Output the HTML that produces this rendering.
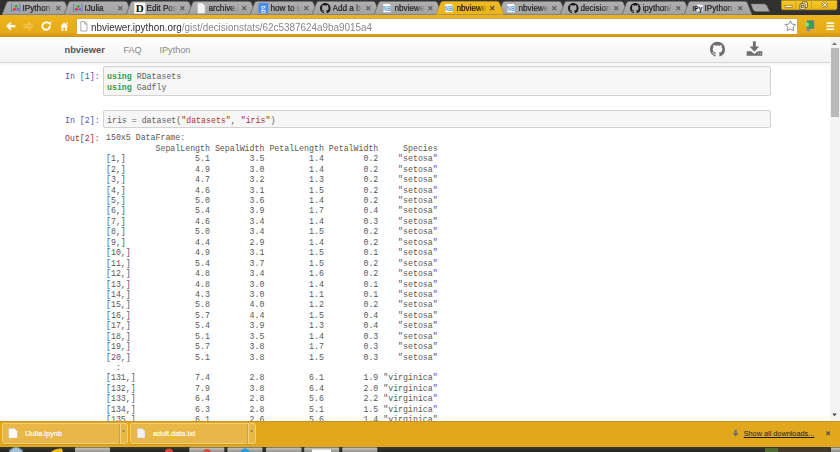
<!DOCTYPE html>
<html><head><meta charset="utf-8">
<style>
*{margin:0;padding:0;box-sizing:border-box}
html,body{width:840px;height:452px;overflow:hidden;background:#fff;font-family:"Liberation Sans",sans-serif}
.abs{position:absolute}
.tt{position:absolute;top:3.6px;font-size:8.2px;line-height:10px;width:30px;overflow:hidden;white-space:nowrap;
  -webkit-mask-image:linear-gradient(90deg,#000 70%,transparent 100%);-webkit-text-stroke:0.2px currentColor}
.tx{position:absolute;top:2.5px;font-size:9px;line-height:10px}
pre{font-family:"Liberation Mono",monospace}
.mono{font-family:"Liberation Mono",monospace;font-size:8.25px;line-height:10.44px;white-space:pre}
</style></head><body>
<!-- frame -->
<div class="abs" style="left:0;top:0;width:840px;height:16px;background-color:#343434;background-image:linear-gradient(45deg,#2a2a2a 25%,transparent 25%,transparent 75%,#2a2a2a 75%),linear-gradient(45deg,#2a2a2a 25%,transparent 25%,transparent 75%,#2a2a2a 75%);background-size:3px 3px;background-position:0 0,1.5px 1.5px"></div>
<svg class="abs" style="left:0;top:0" width="840" height="40" viewBox="0 0 840 40">
<defs>
<linearGradient id="tbg" x1="0" y1="0" x2="0" y2="1"><stop offset="0" stop-color="#efba22"/><stop offset="1" stop-color="#ecb41c"/></linearGradient>
<linearGradient id="itab" x1="0" y1="0" x2="0" y2="1"><stop offset="0" stop-color="#b0b0b0"/><stop offset="1" stop-color="#a2a2a2"/></linearGradient>
</defs>
<path d="M2,14.6 L6.6,2.8 Q7.3,1.3 9.2,1.3 L62.8,1.3 Q64.7,1.3 65.4,2.8 L70,14.6" fill="url(#itab)" stroke="#505050" stroke-width="0.6"/><path d="M64,14.6 L68.6,2.8 Q69.3,1.3 71.2,1.3 L124.8,1.3 Q126.7,1.3 127.4,2.8 L132,14.6" fill="url(#itab)" stroke="#505050" stroke-width="0.6"/><path d="M126,14.6 L130.6,2.8 Q131.3,1.3 133.2,1.3 L186.8,1.3 Q188.7,1.3 189.4,2.8 L194,14.6" fill="url(#itab)" stroke="#505050" stroke-width="0.6"/><path d="M188,14.6 L192.6,2.8 Q193.3,1.3 195.2,1.3 L248.8,1.3 Q250.7,1.3 251.4,2.8 L256,14.6" fill="url(#itab)" stroke="#505050" stroke-width="0.6"/><path d="M250,14.6 L254.6,2.8 Q255.3,1.3 257.2,1.3 L310.8,1.3 Q312.7,1.3 313.4,2.8 L318,14.6" fill="url(#itab)" stroke="#505050" stroke-width="0.6"/><path d="M312,14.6 L316.6,2.8 Q317.3,1.3 319.2,1.3 L372.8,1.3 Q374.7,1.3 375.4,2.8 L380,14.6" fill="url(#itab)" stroke="#505050" stroke-width="0.6"/><path d="M374,14.6 L378.6,2.8 Q379.3,1.3 381.2,1.3 L434.8,1.3 Q436.7,1.3 437.4,2.8 L442,14.6" fill="url(#itab)" stroke="#505050" stroke-width="0.6"/><path d="M498,14.6 L502.6,2.8 Q503.3,1.3 505.2,1.3 L558.8,1.3 Q560.7,1.3 561.4,2.8 L566,14.6" fill="url(#itab)" stroke="#505050" stroke-width="0.6"/><path d="M560,14.6 L564.6,2.8 Q565.3,1.3 567.2,1.3 L620.8,1.3 Q622.7,1.3 623.4,2.8 L628,14.6" fill="url(#itab)" stroke="#505050" stroke-width="0.6"/><path d="M622,14.6 L626.6,2.8 Q627.3,1.3 629.2,1.3 L682.8,1.3 Q684.7,1.3 685.4,2.8 L690,14.6" fill="url(#itab)" stroke="#505050" stroke-width="0.6"/><path d="M684,14.6 L688.6,2.8 Q689.3,1.3 691.2,1.3 L744.8,1.3 Q746.7,1.3 747.4,2.8 L752,14.6" fill="url(#itab)" stroke="#505050" stroke-width="0.6"/><rect x="2" y="13.9" width="750" height="0.8" fill="#8a9098"/><path d="M436,14.6 L440.6,2.8 Q441.3,1.3 443.2,1.3 L496.8,1.3 Q498.7,1.3 499.4,2.8 L504,14.6" fill="url(#tbg)" stroke="#9a7a20" stroke-width="0.5"/><g transform="translate(10.3,3.2)"><path d="M2.2,0.9 H1.2 V8.3 H2.2 M8.8,0.9 H9.8 V8.3 H8.8" fill="none" stroke="#4a7ec0" stroke-width="0.8"/><circle cx="5.8" cy="3.1" r="1.55" fill="#3aaa3a"/><circle cx="4.1" cy="6.1" r="1.55" fill="#d83a3a"/><circle cx="7.6" cy="6.1" r="1.55" fill="#9a5ac8"/></g><path d="M56.3,6.199999999999999 L60.3,10.2 M60.3,6.199999999999999 L56.3,10.2" stroke="#555" stroke-width="1.05"/><g transform="translate(72.3,3.2)"><path d="M2.2,0.9 H1.2 V8.3 H2.2 M8.8,0.9 H9.8 V8.3 H8.8" fill="none" stroke="#4a7ec0" stroke-width="0.8"/><circle cx="5.8" cy="3.1" r="1.55" fill="#3aaa3a"/><circle cx="4.1" cy="6.1" r="1.55" fill="#d83a3a"/><circle cx="7.6" cy="6.1" r="1.55" fill="#9a5ac8"/></g><path d="M118.3,6.199999999999999 L122.3,10.2 M122.3,6.199999999999999 L118.3,10.2" stroke="#555" stroke-width="1.05"/><g transform="translate(134.3,3.2)"><rect x="0" y="-0.5" width="11" height="11" fill="#fff"/><text x="5.5" y="9.2" font-family="Liberation Serif" font-weight="bold" font-size="11" text-anchor="middle" fill="#111">D</text></g><path d="M180.3,6.199999999999999 L184.3,10.2 M184.3,6.199999999999999 L180.3,10.2" stroke="#555" stroke-width="1.05"/><g transform="translate(196.3,3.2)"><path d="M1.5,0 H6 L8.5,2.5 V10 H1.5 Z" fill="#f4f4f4" stroke="#ddd" stroke-width="0.5"/></g><path d="M242.3,6.199999999999999 L246.3,10.2 M246.3,6.199999999999999 L242.3,10.2" stroke="#555" stroke-width="1.05"/><g transform="translate(258.3,3.2)"><rect x="0" y="-0.3" width="10" height="10.3" rx="0.8" fill="#4a8ae8"/><text x="5" y="7.8" font-family="Liberation Serif" font-size="10" text-anchor="middle" fill="#fff">g</text></g><path d="M304.3,6.199999999999999 L308.3,10.2 M308.3,6.199999999999999 L304.3,10.2" stroke="#555" stroke-width="1.05"/><g transform="translate(320.0,2.9000000000000004) scale(0.66)"><path d="M8 0C3.58 0 0 3.58 0 8c0 3.54 2.29 6.53 5.470 7.59.4.07.55-.17.55-.38 0-.19-.01-.82-.01-1.49-2.01.37-2.53-.49-2.69-.94-.09-.23-.48-.94-.82-1.13-.28-.15-.68-.52-.01-.53.63-.01 1.08.58 1.23.82.72 1.21 1.87.87 2.33.66.07-.52.28-.87.51-1.07-1.78-.2-3.64-.89-3.64-3.95 0-.87.31-1.59.82-2.15-.08-.2-.36-1.02.08-2.12 0 0 .67-.21 2.2.82.64-.18 1.320-.27 2-.27.68 0 1.36.09 2 .27 1.53-1.04 2.2-.82 2.2-.82.44 1.1.16 1.92.08 2.12.51.56.82 1.27.82 2.15 0 3.07-1.87 3.75-3.65 3.95.29.25.54.73.54 1.48 0 1.07-.01 1.93-.01 2.2 0 .21.15.46.55.38A8.013 8.013 0 0016 8c0-4.42-3.58-8-8-8z" fill="#1a1a1a"/></g><path d="M366.3,6.199999999999999 L370.3,10.2 M370.3,6.199999999999999 L366.3,10.2" stroke="#555" stroke-width="1.05"/><g transform="translate(383.3,4.0)"><path d="M0,0 H6 L7.4,1.4 V8.2 H0 Z" fill="#fff"/><text x="-0.2" y="7.3" font-family="Liberation Sans" font-weight="bold" font-size="6.6" fill="#5a9ad8" textLength="7.6" lengthAdjust="spacingAndGlyphs">NB</text></g><path d="M428.3,6.199999999999999 L432.3,10.2 M432.3,6.199999999999999 L428.3,10.2" stroke="#555" stroke-width="1.05"/><g transform="translate(445.3,4.0)"><path d="M0,0 H6 L7.4,1.4 V8.2 H0 Z" fill="#fff"/><text x="-0.2" y="7.3" font-family="Liberation Sans" font-weight="bold" font-size="6.6" fill="#5a9ad8" textLength="7.6" lengthAdjust="spacingAndGlyphs">NB</text></g><path d="M490.3,6.199999999999999 L494.3,10.2 M494.3,6.199999999999999 L490.3,10.2" stroke="#444" stroke-width="1.05"/><g transform="translate(507.3,4.0)"><path d="M0,0 H6 L7.4,1.4 V8.2 H0 Z" fill="#fff"/><text x="-0.2" y="7.3" font-family="Liberation Sans" font-weight="bold" font-size="6.6" fill="#5a9ad8" textLength="7.6" lengthAdjust="spacingAndGlyphs">NB</text></g><path d="M552.3,6.199999999999999 L556.3,10.2 M556.3,6.199999999999999 L552.3,10.2" stroke="#555" stroke-width="1.05"/><g transform="translate(568.0,2.9000000000000004) scale(0.66)"><path d="M8 0C3.58 0 0 3.58 0 8c0 3.54 2.29 6.53 5.470 7.59.4.07.55-.17.55-.38 0-.19-.01-.82-.01-1.49-2.01.37-2.53-.49-2.69-.94-.09-.23-.48-.94-.82-1.13-.28-.15-.68-.52-.01-.53.63-.01 1.08.58 1.23.82.72 1.21 1.87.87 2.33.66.07-.52.28-.87.51-1.07-1.78-.2-3.64-.89-3.64-3.95 0-.87.31-1.59.82-2.15-.08-.2-.36-1.02.08-2.12 0 0 .67-.21 2.2.82.64-.18 1.320-.27 2-.27.68 0 1.36.09 2 .27 1.53-1.04 2.2-.82 2.2-.82.44 1.1.16 1.92.08 2.12.51.56.82 1.27.82 2.15 0 3.07-1.87 3.75-3.65 3.95.29.25.54.73.54 1.48 0 1.07-.01 1.93-.01 2.2 0 .21.15.46.55.38A8.013 8.013 0 0016 8c0-4.42-3.58-8-8-8z" fill="#1a1a1a"/></g><path d="M614.3,6.199999999999999 L618.3,10.2 M618.3,6.199999999999999 L614.3,10.2" stroke="#555" stroke-width="1.05"/><g transform="translate(630.0,2.9000000000000004) scale(0.66)"><path d="M8 0C3.58 0 0 3.58 0 8c0 3.54 2.29 6.53 5.470 7.59.4.07.55-.17.55-.38 0-.19-.01-.82-.01-1.49-2.01.37-2.53-.49-2.69-.94-.09-.23-.48-.94-.82-1.13-.28-.15-.68-.52-.01-.53.63-.01 1.08.58 1.23.82.72 1.21 1.87.87 2.33.66.07-.52.28-.87.51-1.07-1.78-.2-3.64-.89-3.64-3.95 0-.87.31-1.59.82-2.15-.08-.2-.36-1.02.08-2.12 0 0 .67-.21 2.2.82.64-.18 1.320-.27 2-.27.68 0 1.36.09 2 .27 1.53-1.04 2.2-.82 2.2-.82.44 1.1.16 1.92.08 2.12.51.56.82 1.27.82 2.15 0 3.07-1.87 3.75-3.65 3.95.29.25.54.73.54 1.48 0 1.07-.01 1.93-.01 2.2 0 .21.15.46.55.38A8.013 8.013 0 0016 8c0-4.42-3.58-8-8-8z" fill="#1a1a1a"/></g><path d="M676.3,6.199999999999999 L680.3,10.2 M680.3,6.199999999999999 L676.3,10.2" stroke="#555" stroke-width="1.05"/><g transform="translate(692.3,3.2)"><rect x="4.6" y="1.4" width="6" height="6.8" fill="#f4f4f4"/><text x="0.2" y="7.6" font-family="Liberation Sans" font-weight="bold" font-size="7.4" fill="#222" textLength="9.8" lengthAdjust="spacingAndGlyphs">IPy</text></g><path d="M738.3,6.199999999999999 L742.3,10.2 M742.3,6.199999999999999 L738.3,10.2" stroke="#555" stroke-width="1.05"/>
<path d="M751,4 L764,4 Q766,4 767,6 L769.5,11.5 L756,11.5 Q754,11.5 753,9.5 Z" fill="#a8a8a8" stroke="#707070" stroke-width="0.5"/>
</svg>
<div class="tt" style="left:22.5px;color:#1e1e1e">IPython</div><div class="tt" style="left:84.5px;color:#1e1e1e">IJulia</div><div class="tt" style="left:146.5px;color:#1e1e1e">Edit Post</div><div class="tt" style="left:208.5px;color:#1e1e1e">archive.ir</div><div class="tt" style="left:270.5px;color:#1e1e1e">how to u</div><div class="tt" style="left:332.5px;color:#1e1e1e">Add a b</div><div class="tt" style="left:394.5px;color:#1e1e1e">nbviewer</div><div class="tt" style="left:456.5px;color:#111">nbviewer</div><div class="tt" style="left:518.5px;color:#1e1e1e">nbviewer</div><div class="tt" style="left:580.5px;color:#1e1e1e">decision</div><div class="tt" style="left:642.5px;color:#1e1e1e">ipython/</div><div class="tt" style="left:704.5px;color:#1e1e1e">IPython</div>
<!-- window controls -->
<svg class="abs" style="left:778px;top:0" width="62" height="12" viewBox="778 0 62 12">
<defs><linearGradient id="wcg" x1="0" y1="0" x2="0" y2="1"><stop offset="0" stop-color="#f8ca22"/><stop offset="1" stop-color="#ebb414"/></linearGradient></defs>
<path d="M781,0 V8.2 Q781,10.2 783,10.2 H835.4 Q837.4,10.2 837.4,8.2 V0 Z" fill="url(#wcg)" stroke="#3a3a3a" stroke-width="0.8"/>
<path d="M796.2,0 V9.6 M811.6,0 V9.6" stroke="#a88420" stroke-width="0.7"/>
<path d="M796.9,0 V9.6 M812.3,0 V9.6" stroke="#f8dc80" stroke-width="0.4"/>
<rect x="785" y="5.2" width="7" height="2.2" fill="#fff4d0" stroke="#5a4a20" stroke-width="0.5"/>
<rect x="802.2" y="1.9" width="5.2" height="5.6" rx="0.6" fill="#f8e8b0" stroke="#4a3a18" stroke-width="0.7"/>
<rect x="800" y="3.8" width="5.2" height="5.6" rx="0.6" fill="#f8e8b0" stroke="#4a3a18" stroke-width="0.7"/>
<rect x="801.3" y="5.4" width="2.6" height="2" fill="none" stroke="#4a3a18" stroke-width="0.6"/>
<path d="M822.2,2.2 L827.4,7.2 M827.4,2.2 L822.2,7.2" stroke="#4a3a18" stroke-width="2.2"/>
<path d="M822.2,2.2 L827.4,7.2 M827.4,2.2 L822.2,7.2" stroke="#fbeec0" stroke-width="1.2"/>
</svg>
<!-- toolbar -->
<div class="abs" style="left:0;top:14.6px;width:840px;height:22.6px;background:linear-gradient(#ecb41c,#e4a816)"></div>
<div class="abs" style="left:0;top:33.4px;width:840px;height:3.6px;background:linear-gradient(#dca014,#d49814)"></div>
<div class="abs" style="left:75.6px;top:18.2px;width:722.4px;height:15.5px;background:#fff;border:0.7px solid #d4a850;border-bottom:none;border-radius:1px"></div>
<div class="abs" style="left:0;top:37px;width:840px;height:0.7px;background:#e4e8ea"></div>
<svg class="abs" style="left:0;top:14" width="840" height="24" viewBox="0 14 840 24">
<!-- back -->
<path d="M6.2,26.1 L10.3,22.2 L11.3,23.3 L9.2,25.1 H15.1 V27.2 H9.2 L11.3,29.1 L10.3,30.2 Z" fill="#fffaf0" stroke="#fffaf0" stroke-width="0.4" stroke-linejoin="round"/>
<!-- forward -->
<path d="M33.2,26.2 L29,22.3 V24.9 H24 V27.5 H29 V30.2 Z" fill="#eab834" stroke="#f4d060" stroke-width="0.8" stroke-linejoin="round"/>
<!-- reload -->
<path d="M49.85,26.1 A3.75,3.75 0 1 1 47.98,22.85" stroke="#fffaf0" stroke-width="2" fill="none"/>
<path d="M46.9,22.4 L51.1,21.5 L50.9,25.8 Z" fill="#fffaf0"/>
<!-- home -->
<path d="M60.3,26.5 L64.1,22.2 L68.3,26.5 H67.1 V30.9 H65.1 V27.8 H63.3 V30.9 H61.5 V26.5 Z" fill="#fffaf0"/>
<rect x="66.4" y="22.2" width="1.1" height="2.4" fill="#fffaf0"/>
<!-- page icon -->
<path d="M80.8,21.6 H84.6 L87,24 V31 H80.8 Z" fill="#fff" stroke="#777" stroke-width="0.6"/>
<path d="M84.6,21.6 V24 H87" fill="none" stroke="#777" stroke-width="0.6"/>
<!-- star -->
<path d="M790.4,20.9 L792.1,24.1 L795.6,24.6 L793.1,27.1 L793.7,30.7 L790.4,29 L787.1,30.7 L787.7,27.1 L785.2,24.6 L788.7,24.1 Z" fill="#fff" stroke="#8a8a8a" stroke-width="0.95" stroke-linejoin="round"/>
<!-- extension -->
<rect x="807.3" y="20.9" width="6.2" height="7.4" rx="0.6" fill="#2aa84a" stroke="#68788e" stroke-width="1.3"/>
<path d="M805.2,22.6 L806.8,21.9 L808.8,23.4 V26.2 L806.8,26.8 L805.2,25.6 Z" fill="#88e27a"/>
<rect x="807.6" y="28.8" width="1.2" height="1.2" fill="#7a8aa0"/>
<ellipse cx="808.2" cy="30.4" rx="2.2" ry="0.8" fill="#7a8aa8"/>
<!-- menu -->
<rect x="826.5" y="22.3" width="7.7" height="1.7" fill="#fff8e0"/>
<rect x="826.5" y="25.3" width="7.7" height="1.7" fill="#fff8e0"/>
<rect x="826.5" y="28.4" width="7.7" height="1.7" fill="#fff8e0"/>
</svg>
<div class="abs" style="left:91.3px;top:20.8px;font-size:10.6px;line-height:12px;color:#303036;white-space:nowrap;transform:scaleX(0.934);transform-origin:0 0">nbviewer.ipython.org<span style="color:#888">/gist/decisionstats/62c5387624a9ba9015a4</span></div>
<!-- page -->
<div class="abs" style="left:0;top:37px;width:830px;height:25.5px;background:linear-gradient(#fff,#f2f2f2);border-bottom:1px solid #d8d8d8;box-shadow:0 1px 3px rgba(0,0,0,0.07)"></div>
<div class="abs" style="left:64.5px;top:44px;font-size:9.3px;line-height:12px;font-weight:bold;color:#555">nbviewer</div>
<div class="abs" style="left:123.5px;top:44px;font-size:9.1px;line-height:12px;color:#888">FAQ</div>
<div class="abs" style="left:159.5px;top:44px;font-size:9.1px;line-height:12px;color:#888">IPython</div>
<svg class="abs" style="left:700px;top:36px" width="70" height="26" viewBox="700 36 70 26">
<g transform="translate(710,41.8) scale(0.94)"><path d="M8 0C3.58 0 0 3.58 0 8c0 3.54 2.29 6.53 5.470 7.59.4.07.55-.17.55-.38 0-.19-.01-.82-.01-1.49-2.01.37-2.53-.49-2.69-.94-.09-.23-.48-.94-.82-1.13-.28-.15-.68-.52-.01-.53.63-.01 1.08.58 1.23.82.72 1.21 1.87.87 2.33.66.07-.52.28-.87.51-1.07-1.78-.2-3.64-.89-3.64-3.95 0-.87.31-1.59.82-2.15-.08-.2-.36-1.02.08-2.12 0 0 .67-.21 2.2.82.64-.18 1.320-.27 2-.27.68 0 1.36.09 2 .27 1.53-1.04 2.2-.82 2.2-.82.44 1.1.16 1.92.08 2.12.51.56.82 1.27.82 2.15 0 3.07-1.87 3.75-3.65 3.95.29.25.54.73.54 1.48 0 1.07-.01 1.93-.01 2.2 0 .21.15.46.55.38A8.013 8.013 0 0016 8c0-4.42-3.58-8-8-8z" fill="#6e6e6e"/></g>
<rect x="752.9" y="41.4" width="2.9" height="6" fill="#6e6e6e"/>
<path d="M749.6,46.5 H759.2 L754.4,51.8 Z" fill="#6e6e6e"/>
<path d="M746.7,51.2 H751 L754.4,54 L757.8,51.2 H762.3 V55.8 H746.7 Z" fill="#6e6e6e"/>
<rect x="758" y="53.2" width="1" height="1" fill="#ddd"/><rect x="760" y="53.2" width="1" height="1" fill="#ddd"/>
</svg>
<!-- scrollbar -->
<div class="abs" style="left:829.6px;top:37px;width:10.4px;height:384px;background:#f4f4f4"></div>
<div class="abs" style="left:830.8px;top:48.2px;width:8.1px;height:68.6px;background:#bababa"></div>
<svg class="abs" style="left:829px;top:37px" width="11" height="384" viewBox="0 0 11 384">
<path d="M3,8 L5.5,5.2 L8,8 Z" fill="#777"/>
<path d="M3.3,376.6 L5.5,379.2 L7.7,376.6 Z" fill="#404040"/>
</svg>
<!-- cell 1 -->
<div class="abs mono" style="left:65px;top:71.5px;color:#4a54a8">In [1]:</div>
<div class="abs" style="left:103.2px;top:66.3px;width:667.5px;height:29.3px;background:#f6f6f6;border:0.7px solid #d2d2d2;border-radius:2px"></div>
<div class="abs mono" style="left:107px;top:71.1px;color:#606060;line-height:11.1px"><span style="color:#3a9a48;font-weight:bold">using</span> RDatasets
<span style="color:#3a9a48;font-weight:bold">using</span> Gadfly</div>
<!-- cell 2 -->
<div class="abs mono" style="left:65px;top:115.7px;color:#4a54a8">In [2]:</div>
<div class="abs" style="left:103.2px;top:110.2px;width:667.5px;height:18.3px;background:#f6f6f6;border:0.7px solid #d2d2d2;border-radius:2px"></div>
<div class="abs mono" style="left:107px;top:115.7px;color:#606060">iris = dataset(<span style="color:#b03030">"datasets"</span>, <span style="color:#b03030">"iris"</span>)</div>
<div class="abs mono" style="left:65px;top:133.8px;color:#a03030">Out[2]:</div>
<div class="abs mono" style="left:106px;top:133.4px;color:#585858">150x5 DataFrame:
          SepalLength SepalWidth PetalLength PetalWidth     Species
[1,]              5.1        3.5         1.4        0.2    &quot;setosa&quot;
[2,]              4.9        3.0         1.4        0.2    &quot;setosa&quot;
[3,]              4.7        3.2         1.3        0.2    &quot;setosa&quot;
[4,]              4.6        3.1         1.5        0.2    &quot;setosa&quot;
[5,]              5.0        3.6         1.4        0.2    &quot;setosa&quot;
[6,]              5.4        3.9         1.7        0.4    &quot;setosa&quot;
[7,]              4.6        3.4         1.4        0.3    &quot;setosa&quot;
[8,]              5.0        3.4         1.5        0.2    &quot;setosa&quot;
[9,]              4.4        2.9         1.4        0.2    &quot;setosa&quot;
[10,]             4.9        3.1         1.5        0.1    &quot;setosa&quot;
[11,]             5.4        3.7         1.5        0.2    &quot;setosa&quot;
[12,]             4.8        3.4         1.6        0.2    &quot;setosa&quot;
[13,]             4.8        3.0         1.4        0.1    &quot;setosa&quot;
[14,]             4.3        3.0         1.1        0.1    &quot;setosa&quot;
[15,]             5.8        4.0         1.2        0.2    &quot;setosa&quot;
[16,]             5.7        4.4         1.5        0.4    &quot;setosa&quot;
[17,]             5.4        3.9         1.3        0.4    &quot;setosa&quot;
[18,]             5.1        3.5         1.4        0.3    &quot;setosa&quot;
[19,]             5.7        3.8         1.7        0.3    &quot;setosa&quot;
[20,]             5.1        3.8         1.5        0.3    &quot;setosa&quot;
  :
[131,]            7.4        2.8         6.1        1.9 &quot;virginica&quot;
[132,]            7.9        3.8         6.4        2.0 &quot;virginica&quot;
[133,]            6.4        2.8         5.6        2.2 &quot;virginica&quot;
[134,]            6.3        2.8         5.1        1.5 &quot;virginica&quot;
[135,]            6.1        2.6         5.6        1.4 &quot;virginica&quot;</div>
<!-- download shelf -->
<div class="abs" style="left:0;top:421px;width:840px;height:26px;background:#e1a81e;border-top:1px solid #c89418"></div>
<div class="abs" style="left:2px;top:423px;width:126px;height:21.3px;background:#e8b748;border:0.8px solid #f0cf78;border-radius:2px;box-shadow:0 0.5px 0 #b88a20"></div>
<div class="abs" style="left:119.2px;top:424px;width:0.6px;height:19.5px;background:#c8a040"></div><div class="abs" style="left:119.8px;top:424px;width:0.7px;height:19.5px;background:#f4d27a"></div>
<div class="abs" style="left:130.3px;top:423px;width:125.5px;height:21.3px;background:#e8b748;border:0.8px solid #f0cf78;border-radius:2px;box-shadow:0 0.5px 0 #b88a20"></div>
<div class="abs" style="left:247.4px;top:424px;width:0.6px;height:19.5px;background:#c8a040"></div><div class="abs" style="left:248px;top:424px;width:0.7px;height:19.5px;background:#f4d27a"></div>
<svg class="abs" style="left:0;top:421px" width="840" height="26" viewBox="0 421 840 26">
<path d="M8.8,428.5 H14.5 L17.2,431.2 V438 H8.8 Z" fill="#fbfbfb" stroke="#ccc" stroke-width="0.4"/>
<path d="M137.2,428.5 H142.5 L145,431 V438 H137.2 Z" fill="#f2f2f2" stroke="#bbb" stroke-width="0.4"/>
<path d="M122.3,430.5 H124.8 L123.55,432 Z" fill="#555"/>
<path d="M250.5,430.5 H253 L251.75,432 Z" fill="#555"/>
<path d="M734.4,430 V433 H732.6 L735.6,436.8 L738.6,433 H736.8 V430 Z" fill="#707070"/><rect x="734.4" y="429.6" width="2.4" height="0.8" fill="#8a8a8a"/>
<path d="M826.5,431.5 L830,435 M830,431.5 L826.5,435" stroke="#505050" stroke-width="1.1"/>
</svg>
<div class="abs" style="left:25px;top:428.5px;font-size:7.4px;line-height:10px;color:#fff;-webkit-text-stroke:0.15px #fff">IJulia.ipynb</div>
<div class="abs" style="left:153px;top:428.5px;font-size:7.4px;line-height:10px;color:#fff;-webkit-text-stroke:0.15px #fff">adult.data.txt</div>
<div class="abs" style="left:743.7px;top:428.6px;font-size:7.3px;line-height:10px;color:#1e1e1e;text-decoration:underline">Show all downloads...</div>
<!-- taskbar -->
<div class="abs" style="left:0;top:447px;width:840px;height:5px;background:linear-gradient(#3a3a34,#25251f)"></div>
<svg class="abs" style="left:0;top:447px" width="840" height="5" viewBox="0 447 840 5"><defs><linearGradient id="tbb" x1="0" y1="0" x2="0" y2="1"><stop offset="0" stop-color="#c8c8c0"/><stop offset="1" stop-color="#8a8a84"/></linearGradient></defs>
<ellipse cx="16" cy="455" rx="8" ry="8" fill="#7a98b0"/><ellipse cx="16" cy="455" rx="6" ry="7" fill="#a8c4d8"/>
<path d="M51,452 Q55,448 62,448.5 L63,452 Z" fill="#e8c020"/>
<rect x="75" y="447.6" width="35" height="5" rx="1" fill="url(#tbb)"/>
<circle cx="169" cy="452.5" r="4" fill="#d84a3a"/>
<rect x="189.3" y="447.6" width="35" height="5" rx="1" fill="url(#tbb)"/><circle cx="207" cy="453" r="4" fill="#d84a3a"/>
<rect x="227.4" y="447.6" width="35" height="5" rx="1" fill="url(#tbb)"/><circle cx="245" cy="453" r="4.5" fill="#2a9ae0"/>
<rect x="266" y="447.6" width="35.5" height="5" rx="1" fill="url(#tbb)"/>
<rect x="304.2" y="447.6" width="35" height="5" rx="1" fill="url(#tbb)"/><rect x="312" y="449.5" width="19" height="3" fill="#fff"/>
<rect x="342.3" y="447.6" width="35" height="5" rx="1" fill="url(#tbb)"/>
<rect x="765" y="448" width="13" height="4" fill="#4e6a34"/>
<rect x="778" y="448" width="52" height="4" fill="#4a3c2c" opacity="0.8"/>
<rect x="831" y="447.5" width="9" height="4.5" fill="url(#tbb)"/>
</svg>
</body></html>
